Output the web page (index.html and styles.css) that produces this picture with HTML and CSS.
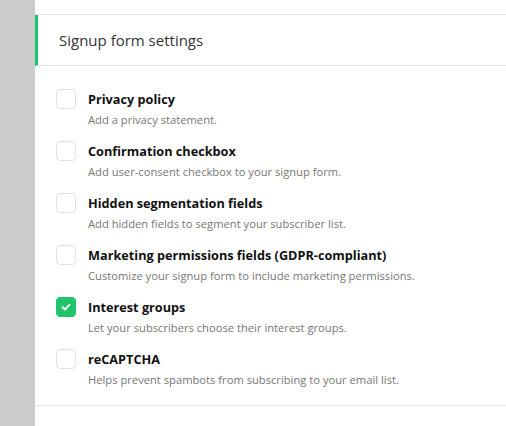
FILE: index.html
```html
<!DOCTYPE html>
<html>
<head>
<meta charset="utf-8">
<link rel="stylesheet" href="styles.css">
</head>
<body>
<div class="layout">
  <div class="sidebar"></div>
  <div class="main">
    <div class="panel">
      <div class="panel-header">Signup form settings</div>
      <ul class="options">
        <li class="option">
          <span class="box"></span>
          <div class="text">
            <div class="title">Privacy policy</div>
            <div class="desc">Add a privacy statement.</div>
          </div>
        </li>
        <li class="option">
          <span class="box"></span>
          <div class="text">
            <div class="title">Confirmation checkbox</div>
            <div class="desc">Add user-consent checkbox to your signup form.</div>
          </div>
        </li>
        <li class="option">
          <span class="box"></span>
          <div class="text">
            <div class="title">Hidden segmentation fields</div>
            <div class="desc">Add hidden fields to segment your subscriber list.</div>
          </div>
        </li>
        <li class="option">
          <span class="box"></span>
          <div class="text">
            <div class="title">Marketing permissions fields (GDPR-compliant)</div>
            <div class="desc">Customize your signup form to include marketing permissions.</div>
          </div>
        </li>
        <li class="option">
          <span class="box checked"><svg viewBox="0 0 20 20" width="20" height="20"><path d="M6.2 10.3l2.6 2.5 5-5.2" fill="none" stroke="#fff" stroke-width="2.2" stroke-linecap="round" stroke-linejoin="round"/></svg></span>
          <div class="text">
            <div class="title">Interest groups</div>
            <div class="desc">Let your subscribers choose their interest groups.</div>
          </div>
        </li>
        <li class="option">
          <span class="box"></span>
          <div class="text">
            <div class="title">reCAPTCHA</div>
            <div class="desc">Helps prevent spambots from subscribing to your email list.</div>
          </div>
        </li>
      </ul>
    </div>
  </div>
</div>
</body>
</html>
```
FILE: styles.css
```css
html, body {
  margin: 0;
  padding: 0;
  background: #fff;
}
body {
  font-family: "Open Sans", "Liberation Sans", sans-serif;
  color: #111;
}
.layout {
  display: flex;
  height: 426px;
}
.sidebar {
  width: 35px;
  background: #cccccc;
  flex: none;
}
.main {
  flex: 1;
  padding-top: 14px;
}
.panel {
  border-top: 1px solid #e4e4e4;
  border-bottom: 1px solid #e4e4e4;
}
.panel-header {
  height: 51px;
  box-sizing: border-box;
  border-left: 3px solid #1ec46f;
  border-bottom: 1px solid #e4e4e4;
  padding-left: 21px;
  display: flex;
  align-items: center;
  font-size: 15px;
  color: #333;
}
.options {
  list-style: none;
  margin: 0;
  padding: 22px 0 5px 21px;
}
.option {
  display: flex;
  gap: 12px;
  height: 52px;
}
.box {
  width: 20px;
  height: 20px;
  box-sizing: border-box;
  border: 1px solid #e2e2e2;
  border-radius: 4px;
  flex: none;
  margin-top: 1px;
}
.box.checked {
  background: #22c46a;
  border-color: #22c46a;
  display: flex;
  align-items: center;
  justify-content: center;
}
.box.checked svg {
  display: block;
}
.text {
  padding-top: 1px;
}
.title {
  font-size: 12.7px;
  font-weight: 700;
  line-height: 20px;
  color: #111;
}
.desc {
  font-size: 11.2px;
  line-height: 16px;
  color: #777;
  margin-top: 3px;
}
```
